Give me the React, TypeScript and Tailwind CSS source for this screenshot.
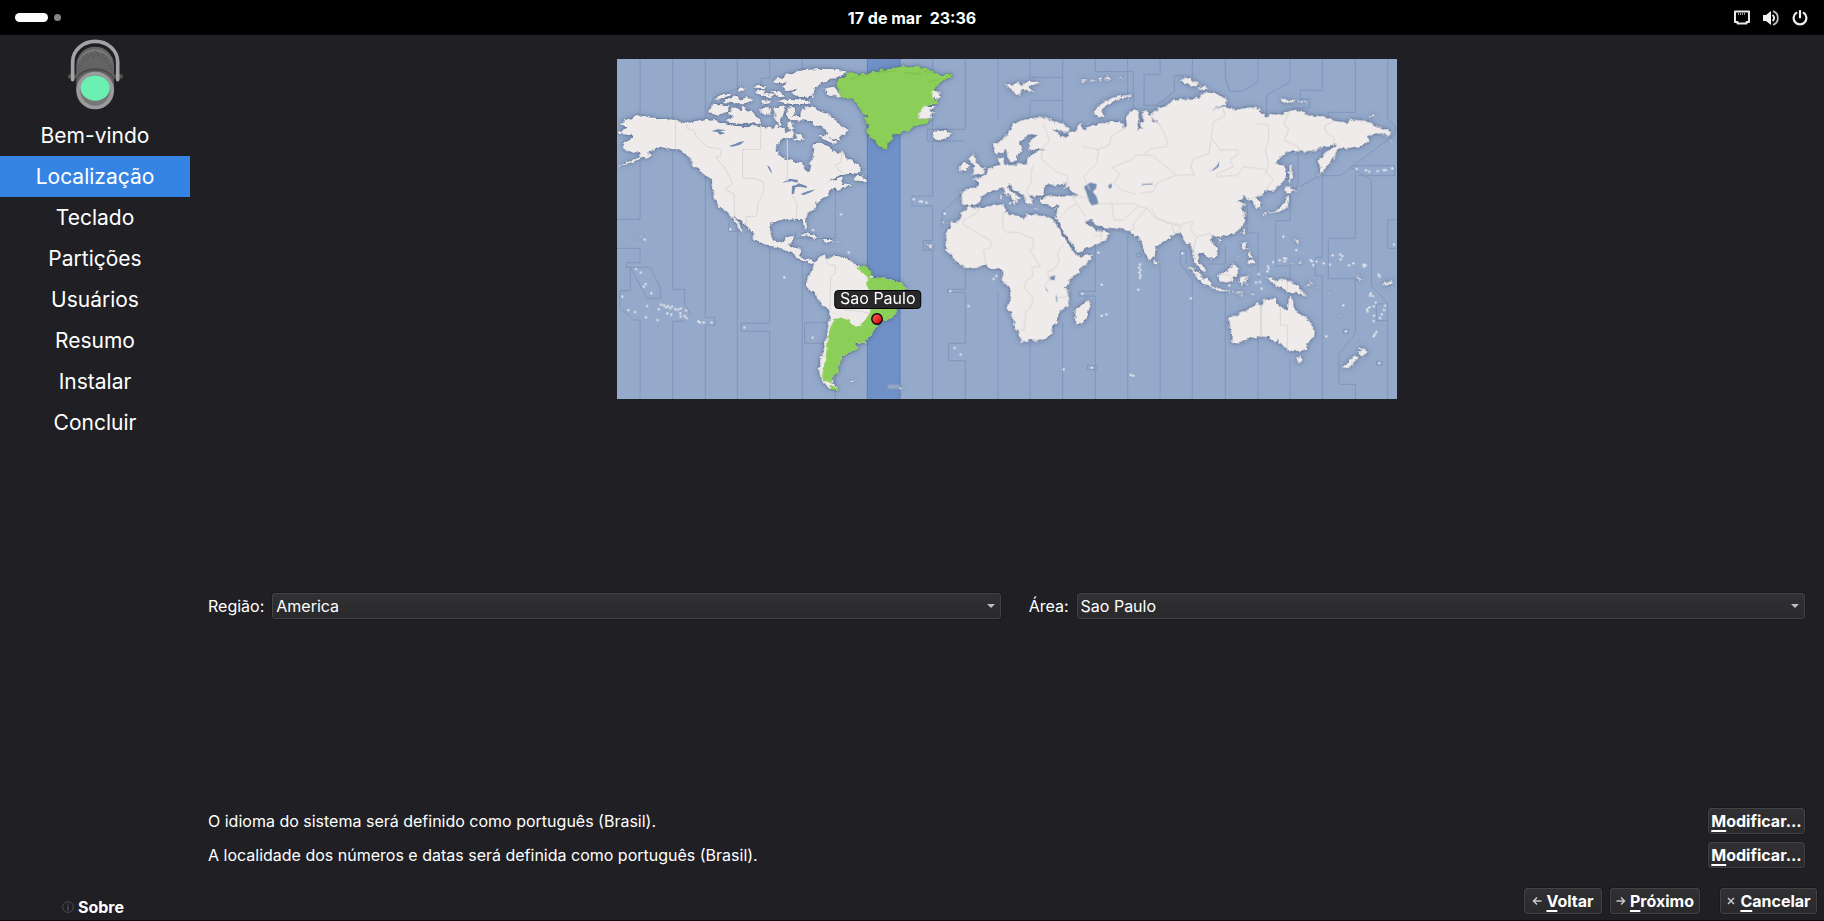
import React from "react";

type Point = [number, number];

const steps = ["Bem-vindo", "Localização", "Teclado", "Partições", "Usuários", "Resumo", "Instalar", "Concluir"];

/* ---- Americas ---- */
const americas = [
  "M33,222 L45,210 62,205 80,198 98,196 112,202 135,203 160,206 195,209 228,217 245,222 262,212 286,206 300,212 316,210 330,218 352,224 385,228 412,232 435,226 470,232 490,236 498,222 520,236 530,246 545,240 553,250 545,262 520,268 500,282 498,300 512,320 540,330 578,338 583,360 596,366 603,352 598,340 612,318 610,280 632,278 655,286 668,300 684,312 696,300 710,322 735,338 752,352 748,366 715,372 690,376 672,384 655,398 676,388 705,380 696,392 694,402 720,400 725,404 695,416 685,420 676,412 660,422 655,434 635,446 620,458 618,474 600,486 588,500 586,514 594,530 588,537 580,526 574,508 560,506 545,512 525,506 500,514 484,522 480,545 487,568 500,576 520,574 527,560 550,558 540,580 540,590 572,596 570,616 585,630 606,628 614,636 606,642 596,640 575,634 558,620 545,608 520,600 500,590 475,588 450,578 432,566 430,548 412,530 395,512 372,498 365,504 352,486 330,470 308,440 308,395 300,384 284,376 270,360 250,346 240,325 225,312 205,300 180,296 150,290 125,300 105,318 80,332 50,342 22,352 50,335 85,322 98,306 70,308 48,300 36,290 45,274 65,268 68,256 30,252 25,246 50,236Z",
  "M366,498 L380,506 390,526 403,549 388,537 374,514Z",
  "M612,636 L632,618 648,612 652,630 658,616 672,616 700,622 718,628 740,645 755,648 780,668 790,684 830,686 865,695 888,712 880,735 862,770 855,800 835,808 812,810 800,830 790,848 765,878 738,878 746,892 740,902 712,908 705,920 693,922 694,940 680,950 686,966 668,984 670,1000 688,1018 655,1016 632,990 626,955 640,905 650,850 660,800 662,782 635,766 615,735 588,705 592,685 606,665Z",
  "M488,96 L505,80 520,84 530,72 580,60 640,56 680,58 716,68 690,78 660,90 640,98 622,108 612,122 608,140 585,142 560,140 545,130 562,118 530,120 515,108 530,98 500,100Z",
  "M640,114 L676,110 694,142 668,138 650,128Z",
  "M297,190 L305,164 335,166 358,170 352,182 325,197Z",
  "M345,210 L372,200 352,190 368,172 390,180 395,166 410,180 425,184 436,200 450,204 446,220 400,222 355,218Z",
  "M318,144 L345,128 362,130 345,142 325,152Z",
  "M340,156 L362,142 380,138 390,150 412,140 428,152 405,160 370,160Z",
  "M380,120 L402,112 404,120 385,126Z M428,112 L442,106 468,110 460,118 440,117Z M432,130 L455,120 470,128 498,136 480,142 455,134Z M480,120 L505,124 525,140 505,142Z",
  "M452,156 L478,148 480,160 460,163Z M500,154 L530,146 600,150 596,162 540,162Z",
  "M450,178 L472,170 484,182 476,195 455,190Z M490,176 L520,168 526,184 512,204 515,228 500,220 490,200 500,190Z",
  "M530,180 L542,170 556,174 552,196 570,202 574,180 600,168 616,172 622,184 640,188 658,192 668,202 680,210 688,222 716,240 704,256 690,258 692,272 668,268 645,262 636,256 655,250 636,232 615,226 600,212 580,208 562,216 540,206 530,196Z",
  "M545,266 L560,262 556,250 575,256 586,268 570,272Z M528,222 L542,214 556,236 540,240Z",
  "M620,256 L650,262 680,276 672,282 640,268Z",
  "M732,392 L745,372 770,390 768,398 750,392Z",
  "M565,552 L590,550 612,558 630,566 612,566 595,558Z M642,570 L662,570 672,577 645,577Z M608,575 L618,577 610,579Z M680,574 L688,577 680,578Z",
  "M250,318 L262,340 256,344 246,330Z M262,348 L275,364 270,366Z M286,372 L300,374 318,388 312,392 296,382Z",
  "M98,318 L120,308 122,314 106,326Z",
  "M958,246 L968,252 975,242 1005,240 1026,254 1010,264 985,270 964,262 974,256Z",
];

const highlighted = [
  "M676,96 L695,84 720,70 775,72 790,64 830,58 870,50 905,48 940,54 970,62 972,70 990,74 1034,76 1020,82 990,98 975,120 968,140 985,160 945,170 930,185 925,206 968,208 940,222 905,232 895,244 870,248 850,254 850,266 838,275 828,300 812,292 800,286 790,270 776,262 766,238 778,228 760,205 778,200 758,192 752,180 745,165 735,155 720,146 692,142 685,120Z",
  "M738,652 L756,646 775,652 788,672 778,684 800,680 830,688 865,695 888,712 880,735 862,770 855,800 835,808 812,812 800,830 790,848 765,878 738,878 746,892 740,904 712,908 705,920 693,922 694,940 680,950 686,966 668,984 666,998 640,992 634,984 645,940 650,900 656,850 668,810 690,802 720,812 738,832 755,826 760,812 780,790 772,700 770,680 755,665Z",
  "M660,1006 L672,1008 690,1018 668,1020Z",
  "M742,396 L748,398 744,402Z",
];

const overGreen = [
  "M930,182 L945,166 958,172 975,170 962,184 974,188 960,196 972,204 948,206 925,206Z",
  "M968,124 L982,128 998,124 985,134 996,142 980,146 966,142Z",
];

const americasDots: Point[] = [
  [78, 657], [92, 668], [107, 702], [101, 710], [124, 730], [37, 740], [55, 780], [75, 786], [111, 768], [108, 802], [143, 810], [153, 764], [162, 766], [168, 772], [174, 768], [180, 774], [186, 770], [172, 790], [184, 794], [196, 777], [204, 779], [212, 776], [211, 790], [212, 800], [224, 798], [230, 804], [228, 782], [146, 778], [265, 814], [270, 818], [281, 817], [305, 818], [403, 833], [104, 569], [361, 538], [693, 493], [523, 682], [911, 448], [930, 454], [936, 455], [949, 458], [608, 863], [716, 608], [609, 540], [1034, 894], [1052, 914], [1076, 768], [1021, 723],
];

/* ---- Europe and Africa ---- */
const europeAfrica = [
  "M125,425 L140,420 180,422 178,402 170,392 155,388 178,382 195,372 205,356 215,352 240,345 236,325 248,318 256,334 250,344 275,345 300,342 325,338 320,320 340,315 345,305 378,298 342,297 327,300 325,280 350,256 340,250 320,256 300,275 308,300 292,318 290,332 272,334 262,318 258,300 228,314 220,300 222,282 245,272 270,242 280,224 300,212 330,206 350,202 382,206 400,215 430,224 450,236 446,246 420,244 395,234 412,248 430,264 448,257 445,248 470,240 472,226 480,222 490,238 510,228 540,222 575,214 600,214 610,224 612,235 620,225 618,200 638,178 655,188 658,215 650,240 662,236 660,220 672,212 664,190 680,184 700,212 720,222 690,200 695,184 715,186 710,172 740,168 760,152 805,146 L805,350 540,350 340,370 180,430 Z",
  "M147,470 L165,474 205,468 250,462 256,472 254,488 280,495 300,502 315,504 318,492 345,494 370,500 395,502 410,525 430,560 450,590 468,610 472,620 516,614 510,630 480,662 450,690 438,710 448,740 448,765 412,790 414,815 400,825 392,850 380,862 365,872 335,873 305,878 298,850 284,832 278,800 262,775 272,740 268,715 245,688 247,660 238,655 215,656 195,645 165,652 138,654 110,636 95,615 78,602 80,575 76,552 95,520 118,508 124,490Z",
  "M468,772 L490,764 506,748 512,765 500,800 488,824 470,822 465,800Z",
  "M150,315 L165,312 160,320 172,328 170,338 180,345 184,356 196,358 190,370 152,376 165,366 158,358 164,350 158,340 145,325Z",
  "M120,350 L126,344 138,336 146,345 140,360 120,362Z",
  "M520,190 L530,175 550,155 580,142 630,134 632,140 590,152 560,165 545,180 552,202 530,198Z",
  "M252,102 L275,104 290,98 312,106 305,96 325,94 360,98 350,106 325,108 345,126 325,124 310,120 293,137 275,122Z",
  "M480,92 L500,90 500,95 484,96Z M508,92 L520,88 526,94Z M534,84 L542,78 548,94 538,92Z M552,88 L570,82 572,88 560,92Z M588,84 L608,84 606,88Z M560,76 L570,78 564,80Z",
  "M266,456 L284,454 282,464Z M240,432 L246,430 245,452 240,452Z M338,473 L356,475 350,478Z M402,474 L412,471 406,478Z",
  "M496,218 L508,216 506,220Z M704,630 L716,634 714,645 704,642Z",
  "M66,518 L74,514 78,520Z M80,520 L88,519 86,523Z M92,515 L99,514 96,519Z M22,584 L38,584 32,596 26,590Z",
];

const africaDots: Point[] = [
  [74, 491], [221, 687], [229, 678], [545, 704], [545, 797], [559, 793], [487, 731], [431, 958], [515, 953], [655, 719], [535, 608], [660, 643], [657, 652], [661, 660], [658, 668], [661, 676], [660, 684], [632, 975], [640, 977],
];

/* ---- Asia and Oceania ---- */
const asiaOceania = [
  "M-115,425 L100,348 300,290 540,250 L500,165 510,156 560,148 600,142 604,132 620,126 660,136 682,150 680,162 635,178 675,168 690,176 720,178 740,172 780,174 786,188 800,202 810,192 852,192 852,184 870,180 915,186 918,194 950,198 985,204 998,212 1042,218 1050,208 1095,212 1140,232 1178,244 1164,258 1130,250 1105,258 1108,276 1075,290 1045,294 1015,295 1005,310 1000,328 975,360 963,370 956,330 968,314 995,298 1010,280 985,288 955,296 930,306 870,304 850,315 826,341 848,344 860,352 862,370 850,395 820,422 795,425 790,436 765,442 782,460 785,475 768,478 760,455 738,445 730,438 722,450 710,454 740,462 722,476 735,490 736,515 712,545 680,555 650,562 638,556 630,570 655,595 652,615 630,628 612,612 598,608 590,610 600,640 618,660 616,672 592,650 582,630 580,600 570,578 562,586 550,565 540,552 520,556 500,568 466,592 464,615 448,634 432,605 418,570 414,556 404,560 380,540 340,535 310,532 290,525 275,512 258,508 265,525 285,536 292,544 310,540 332,552 318,568 290,585 230,606 222,590 205,565 186,535 172,512 165,502 178,465 155,470 130,462 120,455 118,445 150,438 200,436 235,438 215,425 205,412 185,414 200,402 180,402 165,410 150,400 140,402 128,425 130,435 105,440 90,440 98,448 92,452 96,462 80,462 75,440 60,430 30,406 22,404 25,415 50,435 62,445 50,448 55,458 46,458 35,445 15,428 8,415 -10,418 -30,425 -55,440 -60,458 -90,468 -115,462Z",
  "M684,805 L700,798 735,785 750,772 768,760 785,765 795,748 830,746 828,760 845,772 862,778 866,748 872,738 880,765 888,782 905,795 930,815 942,840 940,858 925,880 918,898 890,904 860,902 848,885 835,878 838,868 825,878 810,862 780,860 745,866 720,880 695,880 698,860 688,840Z",
  "M886,918 L897,922 908,919 904,935 894,936Z",
  "M1070,880 L1078,890 1085,896 1104,902 1095,915 1085,922 1074,908 1082,902Z",
  "M1062,916 L1076,922 1060,940 1045,955 1028,952 1045,938Z",
  "M563,648 L585,660 610,680 635,700 634,712 612,702 590,680Z",
  "M630,712 L655,714 680,718 690,724 660,724 634,718Z M694,724 L702,722 700,727Z M706,724 L732,724 720,729Z M748,734 L768,728 756,737Z M716,732 L728,735 722,738Z",
  "M654,674 L680,662 700,642 718,652 712,668 700,690 680,698 660,694Z",
  "M720,682 L730,680 752,676 734,686 744,706 732,694 726,708 718,700Z",
  "M798,684 L818,686 826,696 845,686 890,702 905,722 922,738 895,730 868,728 840,714 822,704 812,696Z",
  "M912,710 L934,702 926,712Z M928,692 L940,704 930,700Z",
  "M726,578 L738,576 736,594 746,602 730,598Z M738,634 L758,626 766,640 752,644Z M744,608 L756,612 758,622 744,616Z M706,630 L720,616 712,626Z",
  "M724,550 L730,538 738,536 732,550Z M652,570 L664,566 660,576Z",
  "M800,484 L822,484 840,474 855,455 858,440 868,440 866,462 858,476 835,486 812,488Z M788,490 L800,486 798,498Z",
  "M856,414 L870,408 888,422 874,430 856,430Z",
  "M868,345 L874,348 876,370 882,385 874,388 872,402 866,395 869,370Z",
  "M538,90 L562,82 580,92 594,102 590,110 560,104Z M592,114 L612,106 630,116 600,120Z",
  "M838,148 L860,146 870,152 886,150 882,158 850,158Z M894,152 L922,155 924,158 896,156Z M858,168 L872,170 866,173Z M1104,198 L1118,193 1130,196 1112,200Z",
  "M1168,270 L1182,270 1176,273Z M892,415 L904,408 898,414Z M914,404 L922,401 916,407Z M955,372 L962,370 958,376Z",
  "M1012,794 L1028,803 1018,800Z M970,715 L976,722 974,718Z M984,726 L996,738 988,733Z M948,710 L962,716 952,713Z M1068,670 L1076,680 1094,694 1082,690 1070,680Z",
  "M886,564 L894,574 892,590 888,576Z M872,640 L886,638 880,643Z M892,636 L908,634 900,640Z M1146,700 L1174,692 1170,702 1156,704Z",
];

const pacificDots: Point[] = [
  [1070, 357], [1098, 361], [1108, 365], [1133, 363], [1151, 360], [1157, 360], [1177, 355], [850, 560], [819, 636], [839, 631], [852, 625], [858, 626], [854, 634], [889, 600], [932, 630], [936, 634], [949, 635], [940, 645], [971, 640], [990, 644], [998, 616], [1020, 614], [1027, 618], [1022, 628], [1047, 646], [1060, 640], [1090, 644], [1097, 646], [1092, 650], [1136, 674], [1139, 680], [1182, 584], [1112, 730], [1110, 737], [1119, 738], [1127, 758], [1121, 769], [1108, 772], [1101, 778], [1103, 785], [1155, 767], [1152, 780], [1145, 793], [1140, 804], [1122, 797], [1121, 813], [1129, 846], [1124, 853], [1121, 859], [1038, 844], [1138, 939], [979, 859], [573, 745], [804, 648], [806, 656], [802, 664], [776, 672], [768, 698], [780, 696], [785, 716], [547, 610], [688, 706], [1030, 766],
];

const americasWater = [
  "M304,244 L322,238 350,240 330,244 346,250 330,254 322,246Z",
  "M356,288 L375,282 388,276 404,274 390,284 368,290Z",
  "M471,346 L479,350 487,370 480,364Z",
  "M516,398 L540,386 564,390 562,398 545,394Z",
  "M545,432 L546,408 560,404 566,400 590,408 590,414 570,410 556,412 552,432Z",
  "M572,432 L592,424 616,418 604,426 580,436Z",
];
const africaWater = [
  "M492,410 L510,398 530,402 528,415 518,425 530,440 535,462 515,466 505,450 500,430Z",
  "M390,680 L405,676 404,690 392,690Z",
  "M374,698 L378,714 386,728 378,720Z",
  "M407,732 L411,744 413,760 408,748Z",
  "M664,408 L668,402 698,400 698,403 672,404Z",
  "M564,406 L576,400 574,414 568,416Z",
];
const asiaWater = ["M622,364 L636,360 650,348 658,334 656,350 642,360Z"];

const americasBorders =
  "M197,209 L197,298 M228,217 L232,236 250,240 262,264 290,290 334,298 332,318 318,322 342,350 368,400 345,418 372,432 374,498 M452,226 L452,298 398,298 398,384 436,386 460,396 462,424 444,460 440,498 408,500 412,530 M532,268 L532,400 M545,434 L562,465 558,508 M696,300 L692,338 676,345 684,360 700,368 M648,632 L660,645 676,646 676,670 662,680 660,780 M780,790 L740,782 700,780";
const africaBorders =
  "M176,474 L172,488 130,510 130,524 212,572 212,592 190,600 198,645 M248,486 L248,534 262,548 290,546 340,566 340,594 330,600 360,648 335,652 338,680 318,694 314,714 340,744 330,776 318,782 312,840 298,842 M430,582 L412,610 418,632 400,660 382,664 388,690 378,700 M410,742 L446,740 446,760 M340,345 L332,370 334,400 318,420 330,440 M370,220 L388,270 364,300 366,330 410,366 444,378 440,410 M486,290 L536,298 530,340 490,380 510,420 M610,220 L612,236 572,260 570,284 530,300 M692,196 L722,230 742,270 738,290 690,296 672,314 700,318 768,375 710,400 700,424 660,430 M672,314 L644,316 640,326 576,352 600,372 582,398 604,420 648,432 M456,438 L470,460 440,480 412,510 M470,460 L496,500 M456,436 L505,444 505,452 M536,462 L575,460 582,510 610,510 655,468 640,460 575,462 M655,468 L680,476 640,520 640,540 M524,560 L545,552 540,580";
const asiaBorders =
  "M665,168 L676,196 640,216 634,262 660,300 714,300 714,312 690,330 700,350 650,372 648,380 714,376 730,350 794,358 820,390 794,424 M634,262 L626,310 580,328 572,350 584,374 530,376 M770,220 L806,224 806,270 796,300 806,340 796,372 M868,186 L852,220 866,240 852,270 895,290 897,304 M1000,214 L974,228 980,248 1002,262 1000,286 M785,765 L785,860 M781,765 L781,860 M841,774 L841,826 862,826 862,902 M440,470 L460,500 500,518 540,524 M455,476 L470,504 540,530 M516,524 L522,550 534,545 550,520 580,515 570,540 590,560 580,600 M590,560 L634,550 M862,692 L862,726 M656,672 L690,676 694,694 M753,446 L790,430";

const zoneLines =
  "M69,0 V481 H0 M0,568 H69 V611 H28 V625 H100 L130,687 130,718 H90 L40,625 V695 H8 V745 L50,783 H69 V1020 M167,0 V691 H203 V735 L221,765 200,787 H167 V1020 M265,0 V775 H294 V798 H265 V1020 M361,0 V1020 M458,0 V57 H432 V100 M458,560 V793 H373 V817 H458 V1020 M556,0 V60 M556,600 V1020 M655,380 V538 H535 V520 M655,610 V791 H563 V853 H655 V1020 M335,490 V517 H365 M270,170 L290,115 370,85 M751,330 H700 M947,0 V211 H931 V246 H947 V411 H885 V441 H947 V545 H918 V573 H947 V1020 M1045,0 V211 H947 M1045,246 H947 M1045,395 L975,460 V505 M1045,620 V691 H991 V700 H1045 V853 H995 V905 H1045 V1020 M1143,0 V180 M1143,700 V1020 M1239,0 V55 H1337 M1239,170 V124 H1337 M1239,840 V1020 M1337,0 V190 M1337,790 V1020 M1435,0 V38 H1549 V155 L1517,190 M1435,570 V590 M1435,560 V697 H1385 V711 H1435 V1020 M1411,920 H1438 V932 H1411Z M1532,0 V120 M1532,530 V1020 M1629,0 V47 H1581 V139 H1620 L1672,98 V50 H1700 M1629,620 V1020 M1558,583 H1573 V594 H1558Z M1726,0 V55 M1690,575 V615 L1726,660 V1020 M1690,575 H1707 V615 M1825,0 V55 L1838,97 H1873 L1923,70 V0 M1825,560 V615 H1770 M1825,690 V1020 M1923,660 V522 H1890 V440 M1923,730 V1020 M2019,0 V70 L1949,107 V165 M2019,400 V485 H1976 V621 H2019 V680 M2019,400 L2116,345 M2043,280 V380 L1990,420 M2019,900 V1020 M2116,0 V94 H2050 V120 H2078 V147 H2030 M2116,345 V595 H2095 V650 H2116 V1020 M2116,350 H2170 L2335,225 V200 L2312,180 V0 M2116,272 V340 M2215,0 V160 H2134 V190 M2200,325 L2263,362 V680 L2312,730 V785 H2278 V735 H2312 M2215,335 V538 H2134 V659 H2215 V823 L2166,885 V976 H2215 V1020 M2205,320 H2333 V350 H2220 M2340,482 H2312 V568 H2340 M2312,785 V1020 M2178,811 H2194 V823 H2178Z M2279,907 H2295 V919 H2279Z";

function Dots({ points }: { points: Point[] }) {
  return (
    <>
      {points.map(([x, y]) => (
        <rect key={`${x}-${y}`} x={x - 3} y={y - 3} width="6" height="6" rx="1" />
      ))}
    </>
  );
}

function Shapes({ paths, fill }: { paths: string[]; fill?: string }) {
  return (
    <>
      {paths.map((d) => (
        <path key={d} d={d} fill={fill} />
      ))}
    </>
  );
}

function WorldMap() {
  return (
    <svg viewBox="0 0 2340 1020" className="block h-auto w-full" role="img" aria-label="Mapa de fusos horários">
      <defs>
        <filter id="coast" x="0" y="0" width="2340" height="1020" filterUnits="userSpaceOnUse" colorInterpolationFilters="sRGB">
          <feTurbulence type="fractalNoise" baseFrequency="0.06" numOctaves="3" seed="4" result="noise" />
          <feDisplacementMap in="SourceGraphic" in2="noise" scale="16" xChannelSelector="R" yChannelSelector="G" result="land" />
          <feGaussianBlur in="land" stdDeviation="9" result="wide" />
          <feColorMatrix in="wide" values="0 0 0 0 0.25  0 0 0 0 0.34  0 0 0 0 0.5  0 0 0 0.5 0" result="wideShadow" />
          <feGaussianBlur in="land" stdDeviation="3" result="tight" />
          <feColorMatrix in="tight" values="0 0 0 0 0.22  0 0 0 0 0.3  0 0 0 0 0.44  0 0 0 0.7 0" result="tightShadow" />
          <feMerge>
            <feMergeNode in="wideShadow" />
            <feMergeNode in="tightShadow" />
            <feMergeNode in="land" />
          </feMerge>
        </filter>
      </defs>
      <rect width="2340" height="1020" fill="#95a9ca" />
      <rect x="751" width="98" height="1020" fill="#7091c8" />
      <path d="M751,0 V1020 M849,0 V1020" stroke="#5f7fb5" strokeWidth="3" />
      <path d={zoneLines} fill="none" stroke="#8296ba" strokeWidth="3" />
      <path d="M849,977 H812 V990 H849Z" fill="#95a9ca" stroke="#8296ba" strokeWidth="3" />
      <g filter="url(#coast)" fill="#efebea">
        <g transform="translate(-21 -27)">
          <Shapes paths={americas} />
          <Shapes paths={highlighted} fill="#8ccf58" />
          <Shapes paths={overGreen} />
          <path d="M722,994 L736,991 730,998Z M868,1012 L880,1014 872,1017Z M76,554 L84,558 80,558Z M88,558 L100,562 92,562Z" />
        </g>
        <g transform="translate(909 -27)">
          <Shapes paths={europeAfrica} />
        </g>
        <g transform="translate(1149 -27)">
          <Shapes paths={asiaOceania} />
        </g>
      </g>
      <g fill="#f1f0f1">
        <g transform="translate(-21 -27)">
          <Dots points={americasDots} />
        </g>
        <g transform="translate(909 -27)">
          <Dots points={africaDots} />
        </g>
        <g transform="translate(1149 -27)">
          <Dots points={pacificDots} />
        </g>
      </g>
      <g fill="#748bb2">
        <g transform="translate(-21 -27)">
          <Shapes paths={americasWater} />
        </g>
        <g transform="translate(909 -27)">
          <Shapes paths={africaWater} />
        </g>
        <g transform="translate(1149 -27)">
          <Shapes paths={asiaWater} />
        </g>
      </g>
      <g fill="none" stroke="#d9d6d6" strokeWidth="3" strokeLinejoin="round">
        <path transform="translate(-21 -27)" d={americasBorders} />
        <path transform="translate(909 -27)" d={africaBorders} />
        <path transform="translate(1149 -27)" d={asiaBorders} />
      </g>
      <path transform="translate(-21 -27)" d="M720,88 L775,72 M800,68 L860,62 M880,68 L935,72 M940,62 L968,70 M955,96 L985,88" stroke="#79b34e" strokeWidth="2" />
    </svg>
  );
}

function LocationPin() {
  return (
    <svg viewBox="0 0 12 12" className="block size-3" aria-hidden="true">
      <defs>
        <linearGradient id="pin" x1="0" y1="0" x2="1" y2="1">
          <stop offset="0" stopColor="#f36a6a" />
          <stop offset="0.5" stopColor="#ee2f2f" />
          <stop offset="1" stopColor="#c50000" />
        </linearGradient>
      </defs>
      <circle cx="6" cy="6" r="5.2" fill="url(#pin)" stroke="#050505" strokeWidth="1.4" />
    </svg>
  );
}

function Logo() {
  const holes: Point[] = [
    [80, 162], [88, 155], [96, 160], [72, 160], [64, 165], [104, 165], [56, 172], [112, 172], [48, 180], [120, 180], [40, 190], [128, 190], [34, 199], [134, 199], [76, 152], [84, 147], [92, 152], [60, 156], [108, 156], [50, 166], [118, 166],
  ];
  return (
    <svg viewBox="203 119 166 212" className="h-[71px] w-[55px]" aria-hidden="true">
      <path d="M203,230 q0,-6 8,-6 h22 v13 h-22 q-8,0 -8,-7Z M369,230 q0,-6 -8,-6 h-22 v13 h22 q8,0 8,-7Z" fill="#54534e" />
      <path d="M228,275 V198 a57,57 0 0 1 114,0 V275Z" fill="#636363" />
      <path d="M232,190 a54,52 0 0 1 106,0 l-3,0 a52,46 0 0 0 -100,0Z" fill="#767676" />
      <path d="M228,250 V242 a57,36 0 0 1 114,0 V250 Z" fill="#4b4b4b" />
      <path d="M230,250 V246 a55,33 0 0 1 110,0 V250 Z" fill="#636363" />
      <g fill="#3e3e3e">
        {holes.map(([x, y]) => (
          <circle key={`${x}-${y}`} cx={x + 200} cy={y + 8} r="1.6" />
        ))}
      </g>
      <path d="M217,241 V187 a68,62 0 0 1 136,0 V241" fill="none" stroke="#a3a3a3" strokeWidth="11" strokeLinecap="round" />
      <rect x="228" y="217" width="114" height="113" rx="56" fill="#9b9b9b" />
      <ellipse cx="285" cy="273" rx="45" ry="46" fill="#777" />
      <ellipse cx="285" cy="266" rx="44" ry="38" fill="#6cf0b1" />
    </svg>
  );
}

function NetworkIcon() {
  return (
    <svg viewBox="0 0 16 16" className="size-4" fill="none" stroke="#e9e9e9" aria-hidden="true">
      <path d="M1,1.5 H15 V12 H12.5 V13.5 H3.5 V12 H1Z" strokeWidth="2" strokeLinejoin="round" />
      <path d="M4.5,3 V5 M6.5,3 V5 M8.5,3 V5 M10.5,3 V5" strokeWidth="1" opacity="0.7" />
    </svg>
  );
}

function VolumeIcon() {
  return (
    <svg viewBox="0 0 16 16" className="size-4" fill="none" stroke="#ededed" aria-hidden="true">
      <path d="M0,5 H3 L8,1 V15 L3,11 H0Z" fill="#f2f2f2" stroke="none" />
      <path d="M9.5,5 a3.6,3.6 0 0 1 0,6" strokeWidth="2" />
      <path d="M10,1.2 a7.2,7.2 0 0 1 0,13.6" strokeWidth="1.8" opacity="0.8" />
    </svg>
  );
}

function PowerIcon() {
  return (
    <svg viewBox="0 0 16 16" className="size-4" fill="none" stroke="#f0f0f0" strokeWidth="2.2" strokeLinecap="round" aria-hidden="true">
      <path d="M8,1 V7.5 M4.3,2.8 a6.4,6.4 0 1 0 7.4,0" />
    </svg>
  );
}

function Glyph({ d }: { d: string }) {
  return (
    <svg viewBox="0 0 10 10" className="size-[10px]" fill="none" stroke="#c9c9c9" strokeWidth="1.5" aria-hidden="true">
      <path d={d} />
    </svg>
  );
}

function Button({ label, icon, className = "" }: { label: string; icon?: string; className?: string }) {
  return (
    <button
      type="button"
      className={`flex h-[26px] items-center justify-center rounded-[3px] border border-[#434346] bg-linear-to-b from-[#313134] to-[#29292c] leading-none font-bold whitespace-nowrap shadow-[0_0_0_1px_#1a1a1d] ${className}`}
    >
      {icon && <Glyph d={icon} />}
      <span>
        <span className="underline decoration-2 underline-offset-3">{label[0]}</span>
        {label.slice(1)}
      </span>
    </button>
  );
}

function Combo({ id, label, value }: { id: string; label: string; value: string }) {
  return (
    <>
      <label htmlFor={id} className="pr-2">
        {label}
      </label>
      <div className="relative">
        <select
          id={id}
          defaultValue={value}
          className="block h-[26px] w-full appearance-none rounded-[3px] border border-[#434346] bg-linear-to-b from-[#313134] to-[#29292c] pl-[3px] leading-5 shadow-[0_0_0_1px_#1a1a1d]"
        >
          <option>{value}</option>
        </select>
        <svg viewBox="0 0 8 4" className="pointer-events-none absolute top-[11px] right-[6px] h-1 w-2" aria-hidden="true">
          <path d="M0,0 H8 L4,4Z" fill="#bdbdbd" />
        </svg>
      </div>
    </>
  );
}

export default function App() {
  return (
    <div className="flex min-h-screen flex-col border-b border-[#0c0c0e] bg-[#201f24] font-[Inter,sans-serif] text-[16px] leading-5 text-white">
      <header className="grid h-[35px] grid-cols-3 items-center bg-black px-[15px]">
        <div className="flex items-center gap-[6px]">
          <span className="h-[9px] w-[33px] rounded-full bg-white" />
          <span className="size-[7px] rounded-full bg-[#868686]" />
        </div>
        <time className="flex justify-center gap-2 font-bold">
          <span>17 de mar</span>
          <span>23:36</span>
        </time>
        <div className="flex items-center justify-end gap-[13px] pr-px">
          <NetworkIcon />
          <VolumeIcon />
          <PowerIcon />
        </div>
      </header>

      <div className="flex flex-1">
        <aside className="flex w-[190px] shrink-0 flex-col">
          <div className="flex h-20 justify-center pt-1">
            <Logo />
          </div>
          <nav>
            <ol>
              {steps.map((step, index) => (
                <li
                  key={step}
                  aria-current={index === 1 ? "step" : undefined}
                  className={`flex h-[41px] items-center justify-center text-[21px] ${index === 1 ? "bg-[#3584e4]" : ""}`}
                >
                  {step}
                </li>
              ))}
            </ol>
          </nav>
          <button type="button" className="mt-auto mb-[3px] flex items-center justify-center gap-1 pr-1 font-bold">
            <svg viewBox="0 0 12 12" className="size-3" fill="none" stroke="#4b4b4f" aria-hidden="true">
              <circle cx="6" cy="6" r="5.4" />
              <path d="M6,2.6 V4 M6,5 V9.4" strokeWidth="1.6" />
            </svg>
            Sobre
          </button>
        </aside>

        <main className="flex min-w-0 flex-1 flex-col pt-6">
          <div className="flex flex-1 flex-col justify-between pr-[19px] pl-[18px]">
            <div className="relative mx-auto mb-1 w-[780px] max-w-full">
              <WorldMap />
              <span className="absolute top-[67.8%] left-[33.5%] flex h-[19px] -translate-x-1/2 items-center rounded-[4px] border border-black bg-[#28282b] px-[5px] pb-[2px] leading-none whitespace-nowrap">
                Sao Paulo
              </span>
              <span className="absolute top-[76.5%] left-[33.4%] -translate-x-1/2 -translate-y-1/2">
                <LocationPin />
              </span>
            </div>

            <div className="grid grid-cols-[auto_1fr_28px_auto_1fr] items-center">
              <Combo id="region" label="Região:" value="America" />
              <span />
              <Combo id="zone" label="Área:" value="Sao Paulo" />
            </div>

            <div className="flex flex-col gap-2">
              <div className="flex items-center justify-between">
                <p>O idioma do sistema será definido como português (Brasil).</p>
                <Button label="Modificar..." className="w-[97px]" />
              </div>
              <div className="flex items-center justify-between">
                <p>A localidade dos números e datas será definida como português (Brasil).</p>
                <Button label="Modificar..." className="w-[97px]" />
              </div>
            </div>
          </div>

          <footer className="flex justify-end pt-5 pr-[7px] pb-[6px]">
            <Button label="Voltar" icon="M9.5,5 H1.5 M5,1.5 L1.5,5 5,8.5" className="w-[78px] gap-1" />
            <Button label="Próximo" icon="M0.5,5 H8.5 M5,1.5 L8.5,5 5,8.5" className="ml-2 w-[90px] gap-1" />
            <Button label="Cancelar" icon="M2,2 L8,8 M8,2 L2,8" className="ml-5 w-[97px] gap-1" />
          </footer>
        </main>
      </div>
    </div>
  );
}
